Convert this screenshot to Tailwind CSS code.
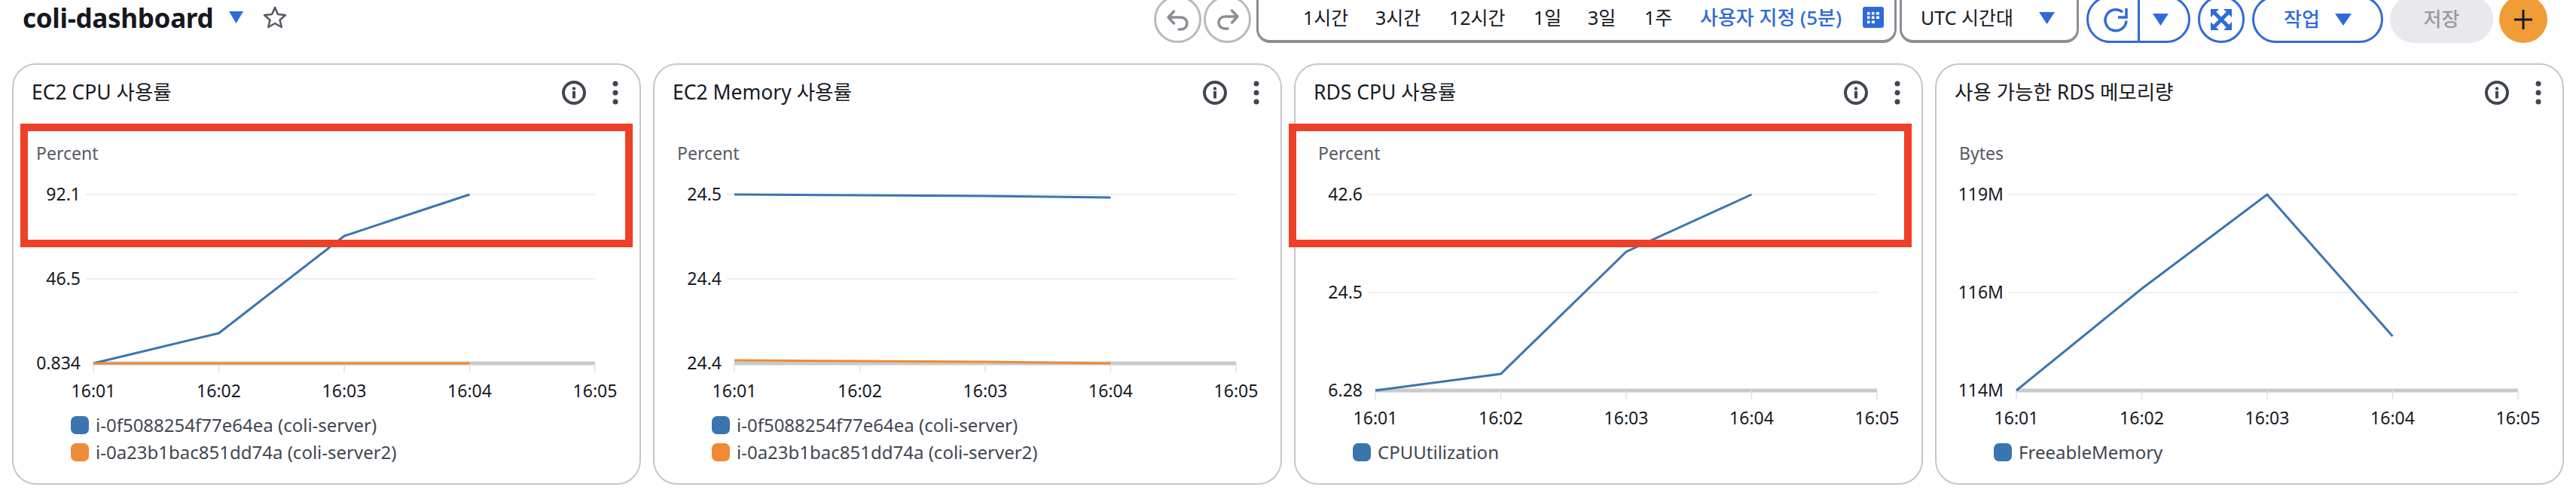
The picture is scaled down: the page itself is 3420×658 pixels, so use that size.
<!DOCTYPE html>
<html lang="ko">
<head>
<meta charset="UTF-8" />
<title>coli-dashboard</title>
<script src="https://cdn.jsdelivr.net/npm/@tailwindcss/browser@4"></script>
</head>
<body class="w-[3420px] h-[658px] overflow-hidden bg-white text-[#16191f] font-['Noto_Sans','Noto_Sans_CJK_KR',sans-serif]">

<header class="h-[84px] pl-[30px] pr-[38px] flex items-start justify-between">
  <div class="flex items-center h-[46px]">
    <h1 class="text-[35px] font-bold tracking-[-0.3px] leading-none">coli-dashboard</h1>
    <svg class="ml-[21px] w-[19px] h-[16px]" viewBox="0 0 19 16"><path d="M0 0H19L9.500 16Z" fill="#2f6bd8"/></svg>
    <svg class="ml-[26px] w-[32px] h-[30px]" viewBox="0 0 32 30"><path d="M16 2l4 9 10 1-7.500 6.500 2.300 9.500L16 23l-8.800 5 2.300-9.500L2 12l10-1Z" fill="none" stroke="#545b64" stroke-width="2.500" stroke-linejoin="round"/></svg>
  </div>

  <div class="flex items-start -mt-[6px]">
    <button class="w-[63px] h-[63px] rounded-full border-[3px] border-[#b9b9c0] flex items-center justify-center">
      <svg class="w-[32px] h-[34px]" viewBox="0 0 32 34" fill="none" stroke="#8d8d94" stroke-width="3.500" stroke-linecap="round" stroke-linejoin="round"><path d="M10.500 6 3 14l7.500 8M3 14h17a7.500 7.500 0 0 1 0 16h-3"/></svg>
    </button>
    <button class="ml-[3px] w-[63px] h-[63px] rounded-full border-[3px] border-[#b9b9c0] flex items-center justify-center">
      <svg class="w-[32px] h-[34px]" viewBox="0 0 32 34" fill="none" stroke="#8d8d94" stroke-width="3.500" stroke-linecap="round" stroke-linejoin="round"><path d="M21.500 5 29 13l-7.500 8M29 13H12a7.500 7.500 0 0 0 0 16h4"/></svg>
    </button>

    <div class="ml-[7px] w-[850px] h-[63px] rounded-b-[18px] border-x-[3px] border-b-[4px] border-[#8d8d94] relative flex items-center text-[25px] pl-[59px]">
      <span class="w-[96px]">1시간</span>
      <span class="w-[98px]">3시간</span>
      <span class="w-[112px]">12시간</span>
      <span class="w-[72px]">1일</span>
      <span class="w-[75px]">3일</span>
      <span class="w-[74px]">1주</span>
      <span class="font-medium text-[#2f6bd8] whitespace-nowrap text-[26px]">사용자 지정 (5분)</span>
      <svg class="absolute left-[802px] top-[15px] w-[28px] h-[28px]" viewBox="0 0 28 28"><rect width="28" height="28" rx="3" fill="#2f6bd8"/><path d="M6 7h3.500v3.500H6zM12 7h3.500v3.500H12zM18 7h4v3.500h-4zM6 12.500h3.500V16H6zM12 12.500h3.500V16H12zM18 12.500h4V16h-4zM6 18.500h3.500V22H6zM12 18.500h4V22h-4z" fill="#fff"/></svg>
    </div>

    <div class="ml-[4px] w-[238px] h-[63px] rounded-b-[18px] border-x-[3px] border-b-[4px] border-[#8d8d94] flex items-center text-[25px] pl-[25px]">
      <span>UTC 시간대</span>
      <svg class="ml-auto mr-[29px] w-[21px] h-[16px]" viewBox="0 0 21 16"><path d="M0 0H21L10.500 16Z" fill="#2f6bd8"/></svg>
    </div>

    <div class="ml-[10px] w-[138px] h-[63px] rounded-full border-[3px] border-[#2f6bd8] flex">
      <div class="w-[68px] h-full border-r-[3px] border-[#2f6bd8] flex items-center justify-center pl-[8px]">
        <svg class="w-[34px] h-[34px]" viewBox="0 0 34 34" fill="none" stroke="#2f6bd8" stroke-width="3.500"><path d="M30 18.500a14 14 0 1 1-5-11.500"/><path d="M30 2v12H19"/></svg>
      </div>
      <div class="flex-1 flex items-center justify-center pr-[10px]">
        <svg class="w-[21px] h-[16px]" viewBox="0 0 21 16"><path d="M0 0H21L10.500 16Z" fill="#2f6bd8"/></svg>
      </div>
    </div>

    <button class="ml-[10px] w-[62px] h-[63px] rounded-full border-[3px] border-[#2f6bd8] flex items-center justify-center">
      <svg class="w-[28px] h-[28px]" viewBox="0 0 28 28"><path d="M0 0H11L0 11ZM28 0V11L17 0ZM28 28H17L28 17ZM0 28V17L11 28Z" fill="#2f6bd8"/><path d="M3 3 25 25M25 3 3 25" stroke="#2f6bd8" stroke-width="5"/></svg>
    </button>

    <button class="ml-[10px] w-[174px] h-[63px] rounded-full border-[3px] border-[#2f6bd8] flex items-center pl-[39px] text-[26px] font-medium text-[#2f6bd8]">
      <span>작업</span>
      <svg class="ml-[20px] w-[22px] h-[16px]" viewBox="0 0 22 16"><path d="M0 0H22L11 16Z" fill="#2f6bd8"/></svg>
    </button>

    <button class="ml-[9px] w-[137px] h-[63px] rounded-full bg-[#e9e9ed] text-[26px] font-medium text-[#9a9aa0]">저장</button>

    <button class="ml-[8px] w-[64px] h-[63px] rounded-full bg-[#f09d38] flex items-center justify-center">
      <svg class="w-[24px] h-[26px]" viewBox="0 0 24 26"><path d="M10.500 0h3v11.500H24v3H13.500V26h-3V14.500H0v-3h10.500Z" fill="#16191f"/></svg>
    </button>
  </div>
</header>

<main id="cards" class="grid grid-cols-4 gap-x-[16px] px-[16px]"></main>

<script>
  const BLUE = "#3a75b0";
  const ORANGE = "#f08a36";
  const server1 = "i-0f5088254f77e64ea (coli-server)";
  const server2 = "i-0a23b1bac851dd74a (coli-server2)";

  const charts = [
    { title: "EC2 CPU 사용률", unit: "Percent", labels: ["92.1", "46.5", "0.834"], two: true,
      box: "left-[9px] w-[813px]",
      lines: [{ color: BLUE, pts: [292, 252, 123, 68] }, { color: ORANGE, pts: [292, 292, 292, 292] }],
      legend: [[BLUE, server1], [ORANGE, server2]] },
    { title: "EC2 Memory 사용률", unit: "Percent", labels: ["24.5", "24.4", "24.4"], two: true,
      lines: [{ color: BLUE, pts: [68, 69, 70, 72] }, { color: ORANGE, pts: [288, 289, 290, 292] }],
      legend: [[BLUE, server1], [ORANGE, server2]] },
    { title: "RDS CPU 사용률", unit: "Percent", labels: ["42.6", "24.5", "6.28"],
      box: "-left-[9px] w-[827px]",
      lines: [{ color: BLUE, pts: [328, 306, 144, 68] }],
      legend: [[BLUE, "CPUUtilization"]] },
    { title: "사용 가능한 RDS 메모리량", unit: "Bytes", labels: ["119M", "116M", "114M"],
      lines: [{ color: BLUE, pts: [328, 193, 68, 256] }],
      legend: [[BLUE, "FreeableMemory"]] },
  ];

  const xs = [106, 272.5, 439, 605.5, 772];

  function renderChart(c) {
    const base = c.two ? 292 : 328;
    const mid = (68 + base) / 2;
    const grid = [68, mid].map(y => `<path d="M96 ${y}H772" stroke="#eeeeef" stroke-width="2"/>`).join("");
    const ticks = xs.map(x => `<path d="M${x} ${base}V${base + 12}" stroke="#e1e1e4" stroke-width="1.500"/>`).join("");
    const yLabels = [68, mid, base].map((y, i) => `<text x="89" y="${y + 8}" text-anchor="end" class="text-[23px] fill-[#16191f]">${c.labels[i]}</text>`).join("");
    const xLabels = ["16:01", "16:02", "16:03", "16:04", "16:05"].map((t, i) => `<text x="${xs[i]}" y="${base + 45}" text-anchor="middle" class="text-[23px] fill-[#16191f]">${t}</text>`).join("");
    const lines = c.lines.map(l => `<polyline fill="none" stroke="${l.color}" stroke-width="3" points="${l.pts.map((y, i) => xs[i] + "," + y).join(" ")}"/>`).join("");
    return `<svg class="block w-[831px] ${c.two ? "h-[352px]" : "h-[388px]"}" viewBox="0 -6 831 ${base + 60}">
      <text x="30" y="22" class="text-[23px] fill-[#545b64]">${c.unit}</text>
      ${grid}${yLabels}
      <path d="M106 ${base}H772" stroke="#cacaca" stroke-width="5"/>
      ${ticks}${xLabels}${lines}
    </svg>`;
  }

  document.getElementById("cards").innerHTML = charts.map(c => `
    <section class="relative h-[559px] rounded-[32px] border-2 border-[#c6c6cd] flex flex-col">
      <div class="h-[74px] flex items-center pl-[24px] pr-[27px]">
        <h2 class="text-[26.500px] leading-none pb-[2px]">${c.title}</h2>
        <svg class="ml-auto w-[32px] h-[32px]" viewBox="0 0 32 32"><circle cx="16" cy="16" r="14" fill="none" stroke="#414750" stroke-width="4"/><path d="M14 14h4v9.500h-4z" fill="#414750"/><circle cx="16" cy="10.500" r="2.200" fill="#414750"/></svg>
        <svg class="ml-[34px] w-[10px] h-[34px]" viewBox="0 0 10 34"><circle cx="5" cy="5" r="3.500" fill="#414750"/><circle cx="5" cy="17" r="3.500" fill="#414750"/><circle cx="5" cy="29" r="3.500" fill="#414750"/></svg>
      </div>
      <div class="mt-[24px]">${renderChart(c)}</div>
      ${c.box ? `<div class="absolute top-[78px] h-[164px] border-[10px] border-[#ee4027] ${c.box}"></div>` : ""}
      <ul class="ml-[76px] mt-[16px] flex flex-col gap-y-[12px] text-[24px] text-[#414750]">
        ${c.legend.map(([color, name]) => `<li class="flex items-center h-[24px]"><span class="w-[24px] h-[24px] rounded-[7px] mr-[9px]" style="background:${color}"></span>${name}</li>`).join("")}
      </ul>
    </section>`).join("");
</script>
</body>
</html>
